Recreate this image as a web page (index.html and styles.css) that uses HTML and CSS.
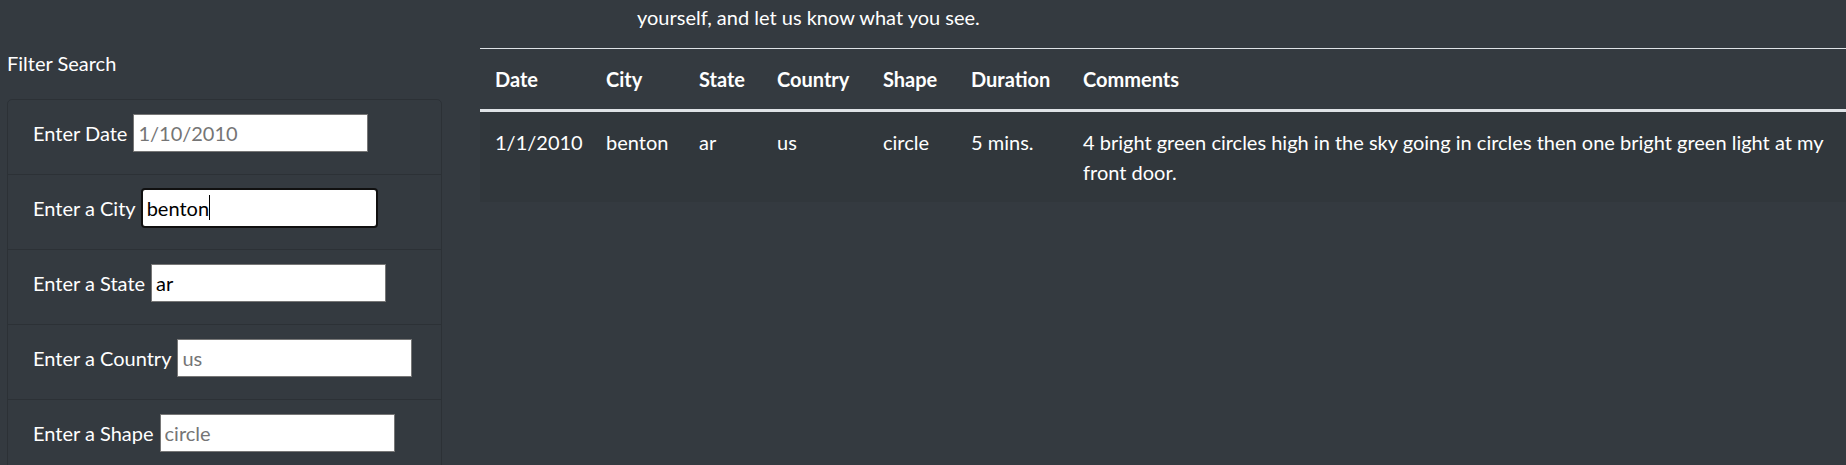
FILE: index.html
```html
<!DOCTYPE html>
<html lang="en">
<head>
<meta charset="utf-8">
<title>UFO Sightings</title>
<link rel="stylesheet" href="styles.css">
</head>
<body>
<div class="page">
  <aside class="sidebar">
    <h5 class="filter-title">Filter Search</h5>
    <ul class="filter-list">
      <li class="filter-item">
        <label for="datetime">Enter Date</label>
        <input class="field" id="datetime" type="text" placeholder="1/10/2010">
      </li>
      <li class="filter-item">
        <label for="city">Enter a City</label>
        <span class="field-wrap">
          <input class="field is-focused" id="city" type="text" value="benton">
          <span class="caret"></span>
        </span>
      </li>
      <li class="filter-item">
        <label for="state">Enter a State</label>
        <input class="field" id="state" type="text" value="ar">
      </li>
      <li class="filter-item">
        <label for="country">Enter a Country</label>
        <input class="field" id="country" type="text" placeholder="us">
      </li>
      <li class="filter-item">
        <label for="shape">Enter a Shape</label>
        <input class="field" id="shape" type="text" placeholder="circle">
      </li>
    </ul>
  </aside>
  <main class="content">
    <p class="intro">yourself, and let us know what you see.</p>
    <table class="ufo-table">
      <colgroup>
        <col class="c-date">
        <col class="c-city">
        <col class="c-state">
        <col class="c-country">
        <col class="c-shape">
        <col class="c-duration">
        <col class="c-comments">
      </colgroup>
      <thead>
        <tr>
          <th>Date</th>
          <th>City</th>
          <th>State</th>
          <th>Country</th>
          <th>Shape</th>
          <th>Duration</th>
          <th>Comments</th>
        </tr>
      </thead>
      <tbody>
        <tr>
          <td>1/1/2010</td>
          <td>benton</td>
          <td>ar</td>
          <td>us</td>
          <td>circle</td>
          <td>5 mins.</td>
          <td>4 bright green circles high in the sky going in circles then one bright green light at my front door.</td>
        </tr>
      </tbody>
    </table>
  </main>
</div>
</body>
</html>
```
FILE: styles.css
```css
html, body {
  margin: 0;
  padding: 0;
  overflow: hidden;
}
body {
  background: #343a40;
  color: #ffffff;
  font-family: "Lato", "Open Sans", sans-serif;
  font-size: 20px;
  line-height: 1.5;
}
.page {
  display: flex;
  align-items: flex-start;
  width: max-content;
}
.sidebar {
  flex: 0 0 480px;
  box-sizing: border-box;
  padding: 48px 38px 0 7px;
}
.filter-title {
  margin: 0 0 21px;
  font-size: 20px;
  font-weight: 400;
  line-height: 30px;
}
.filter-list {
  list-style: none;
  margin: 0;
  padding: 0;
  border: 1px solid rgba(0, 0, 0, 0.15);
  border-radius: 5px;
}
.filter-item {
  box-sizing: border-box;
  height: 75px;
  padding: 14px 25px 0;
  display: flex;
  align-items: flex-start;
  gap: 6px;
  border-bottom: 1px solid rgba(0, 0, 0, 0.15);
}
.filter-item label {
  height: 38px;
  line-height: 38px;
}
.field-wrap {
  position: relative;
  display: block;
}
.field {
  display: block;
  box-sizing: border-box;
  width: 235px;
  height: 38px;
  margin: 0;
  padding: 0 4px;
  border: 1px solid #767676;
  border-radius: 0;
  background: #ffffff;
  color: #000000;
  font-family: inherit;
  font-size: 20px;
}
.field::placeholder {
  color: #757575;
  opacity: 1;
}
.field.is-focused {
  border-color: #ffffff;
  border-radius: 3px;
  outline: 2px solid #101010;
  outline-offset: -1px;
}
.caret {
  position: absolute;
  left: 67px;
  top: 6px;
  width: 1px;
  height: 25px;
  background: #000000;
}
.content {
  flex: 0 0 1410px;
}
.intro {
  margin: 2px 0 16px 157px;
  line-height: 30px;
}
.ufo-table {
  width: 1380px;
  table-layout: fixed;
  border-collapse: collapse;
}
.c-date { width: 111px; }
.c-city { width: 93px; }
.c-state { width: 78px; }
.c-country { width: 106px; }
.c-shape { width: 88px; }
.c-duration { width: 112px; }
.ufo-table th,
.ufo-table td {
  padding: 15px;
  text-align: left;
  vertical-align: top;
  line-height: 30px;
}
.ufo-table th {
  font-weight: 700;
  border-top: 1px solid #dee2e6;
  border-bottom: 3px solid #dee2e6;
}
.ufo-table tbody tr:nth-of-type(odd) {
  background: rgba(0, 0, 0, 0.05);
}
```
